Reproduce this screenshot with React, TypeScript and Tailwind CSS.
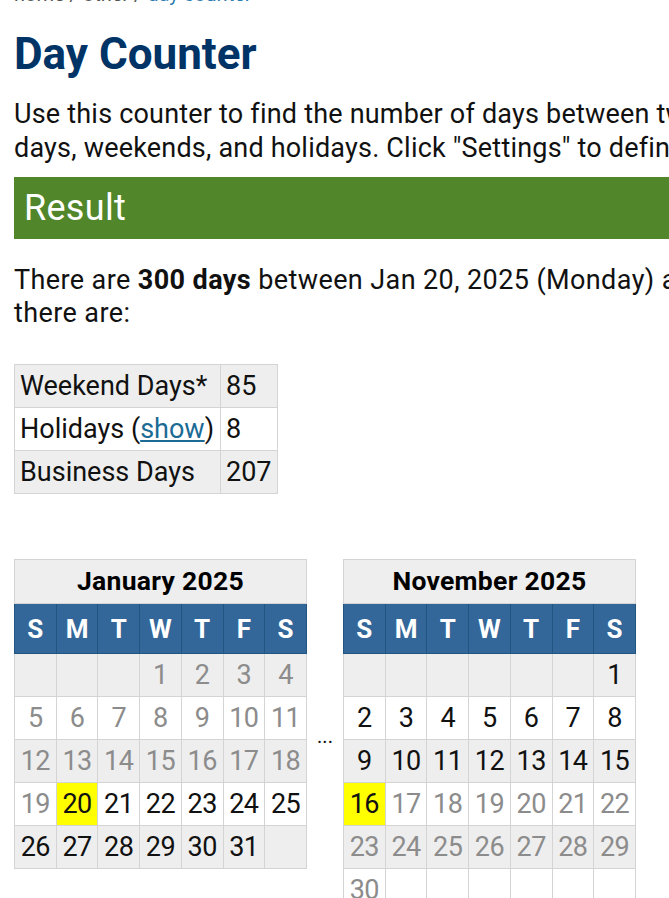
import React from "react";

type Day = { n: number; on: boolean; hl?: boolean } | null;

const dow = ["S", "M", "T", "W", "T", "F", "S"];

// build weeks for a month, marking which days fall inside the counted range
const buildWeeks = (
  first: number,
  len: number,
  inRange: (d: number) => boolean,
  highlight: number
) => {
  const cells: Day[] = [];
  for (let i = 0; i < first; i++) cells.push(null);
  for (let d = 1; d <= len; d++)
    cells.push({ n: d, on: inRange(d), hl: d === highlight });
  while (cells.length % 7 !== 0) cells.push(null);
  const weeks: Day[][] = [];
  for (let i = 0; i < cells.length; i += 7) weeks.push(cells.slice(i, i + 7));
  return weeks;
};

const janWeeks = buildWeeks(3, 31, (d) => d >= 20, 20);
const novWeeks = buildWeeks(6, 30, (d) => d <= 16, 16);

const Calendar = ({ title, weeks }: { title: string; weeks: Day[][] }) => (
  <table className="border-collapse table-fixed w-[293px] text-[27px] leading-none">
    <thead>
      <tr>
        <th
          colSpan={7}
          className="h-[44px] bg-[#eeeeee] border border-[#d4d4d4] font-bold text-[26.5px] tracking-[0.3px] text-black"
        >
          {title}
        </th>
      </tr>
      <tr>
        {dow.map((d, i) => (
          <th
            key={i}
            className="h-[50px] w-[42px] bg-[#336699] border border-[#22557f] text-white font-bold text-[26px]"
          >
            {d}
          </th>
        ))}
      </tr>
    </thead>
    <tbody>
      {weeks.map((w, wi) => (
        <tr key={wi} className={wi % 2 === 0 ? "bg-[#eeeeee]" : "bg-white"}>
          {w.map((c, ci) => (
            <td
              key={ci}
              className={
                "h-[43px] border border-[#d4d4d4] text-center tracking-[-0.5px] " +
                (c && c.hl ? "bg-[#ffff00] " : "") +
                (c && c.on ? "text-[#111111]" : "text-[#8c8c8c]")
              }
            >
              {c ? c.n : ""}
            </td>
          ))}
        </tr>
      ))}
    </tbody>
  </table>
);

export default function App() {
  return (
    <div className="w-[669px] h-[898px] overflow-hidden bg-white font-['Roboto',sans-serif] text-[#111111]">
      <div className="w-[1100px] pl-[14px]">
        <div className="-mt-[17px] h-[22px] text-[20px] leading-[22px] text-[#555555] whitespace-nowrap">
          home / other / <span className="text-[#2a7ab0]">day counter</span>
        </div>
        <h1 className="mt-[25px] text-[44px] leading-[48px] font-bold text-[#003366]">
          Day Counter
        </h1>
        <p className="mt-[19px] whitespace-nowrap text-[27px] tracking-[0.2px] leading-[34px]">
          Use this counter to find the number of days between two dates. It can also count the number of business
          <br />
          days, weekends, and holidays. Click "Settings" to define holidays.
        </p>
        <div className="mt-[12px] h-[62px] w-[1000px] bg-[#51862a] pl-[10px] flex items-center text-white text-[36px] tracking-[0.3px]">
          Result
        </div>
        <p className="mt-[25px] whitespace-nowrap text-[27px] tracking-[0.4px] leading-[33px]">
          There are <b>300 days</b> between Jan 20, 2025 (Monday) and Nov 16, 2025 (Sunday). In this period,
          <br />
          there are:
        </p>
        <table className="mt-[34px] border-collapse text-[27px]">
          <tbody>
            <tr className="bg-[#eeeeee]">
              <td className="h-[43px] w-[206px] border border-[#d4d4d4] px-[5px] whitespace-nowrap">Weekend Days*</td>
              <td className="h-[43px] w-[57px] border border-[#d4d4d4] px-[5px]">85</td>
            </tr>
            <tr className="bg-white">
              <td className="h-[43px] border border-[#d4d4d4] px-[5px] whitespace-nowrap">
                Holidays (<span className="text-[#1b6b95] underline">show</span>)
              </td>
              <td className="h-[43px] border border-[#d4d4d4] px-[5px]">8</td>
            </tr>
            <tr className="bg-[#eeeeee]">
              <td className="h-[43px] border border-[#d4d4d4] px-[5px] whitespace-nowrap">Business Days</td>
              <td className="h-[43px] border border-[#d4d4d4] px-[5px]">207</td>
            </tr>
          </tbody>
        </table>
        <div className="mt-[65px] flex items-center">
          <div className="self-start">
            <Calendar title="January 2025" weeks={janWeeks} />
          </div>
          <div className="w-[36px] text-center text-[20px] leading-none">...</div>
          <div className="self-start">
            <Calendar title="November 2025" weeks={novWeeks} />
          </div>
        </div>
      </div>
    </div>
  );
}
